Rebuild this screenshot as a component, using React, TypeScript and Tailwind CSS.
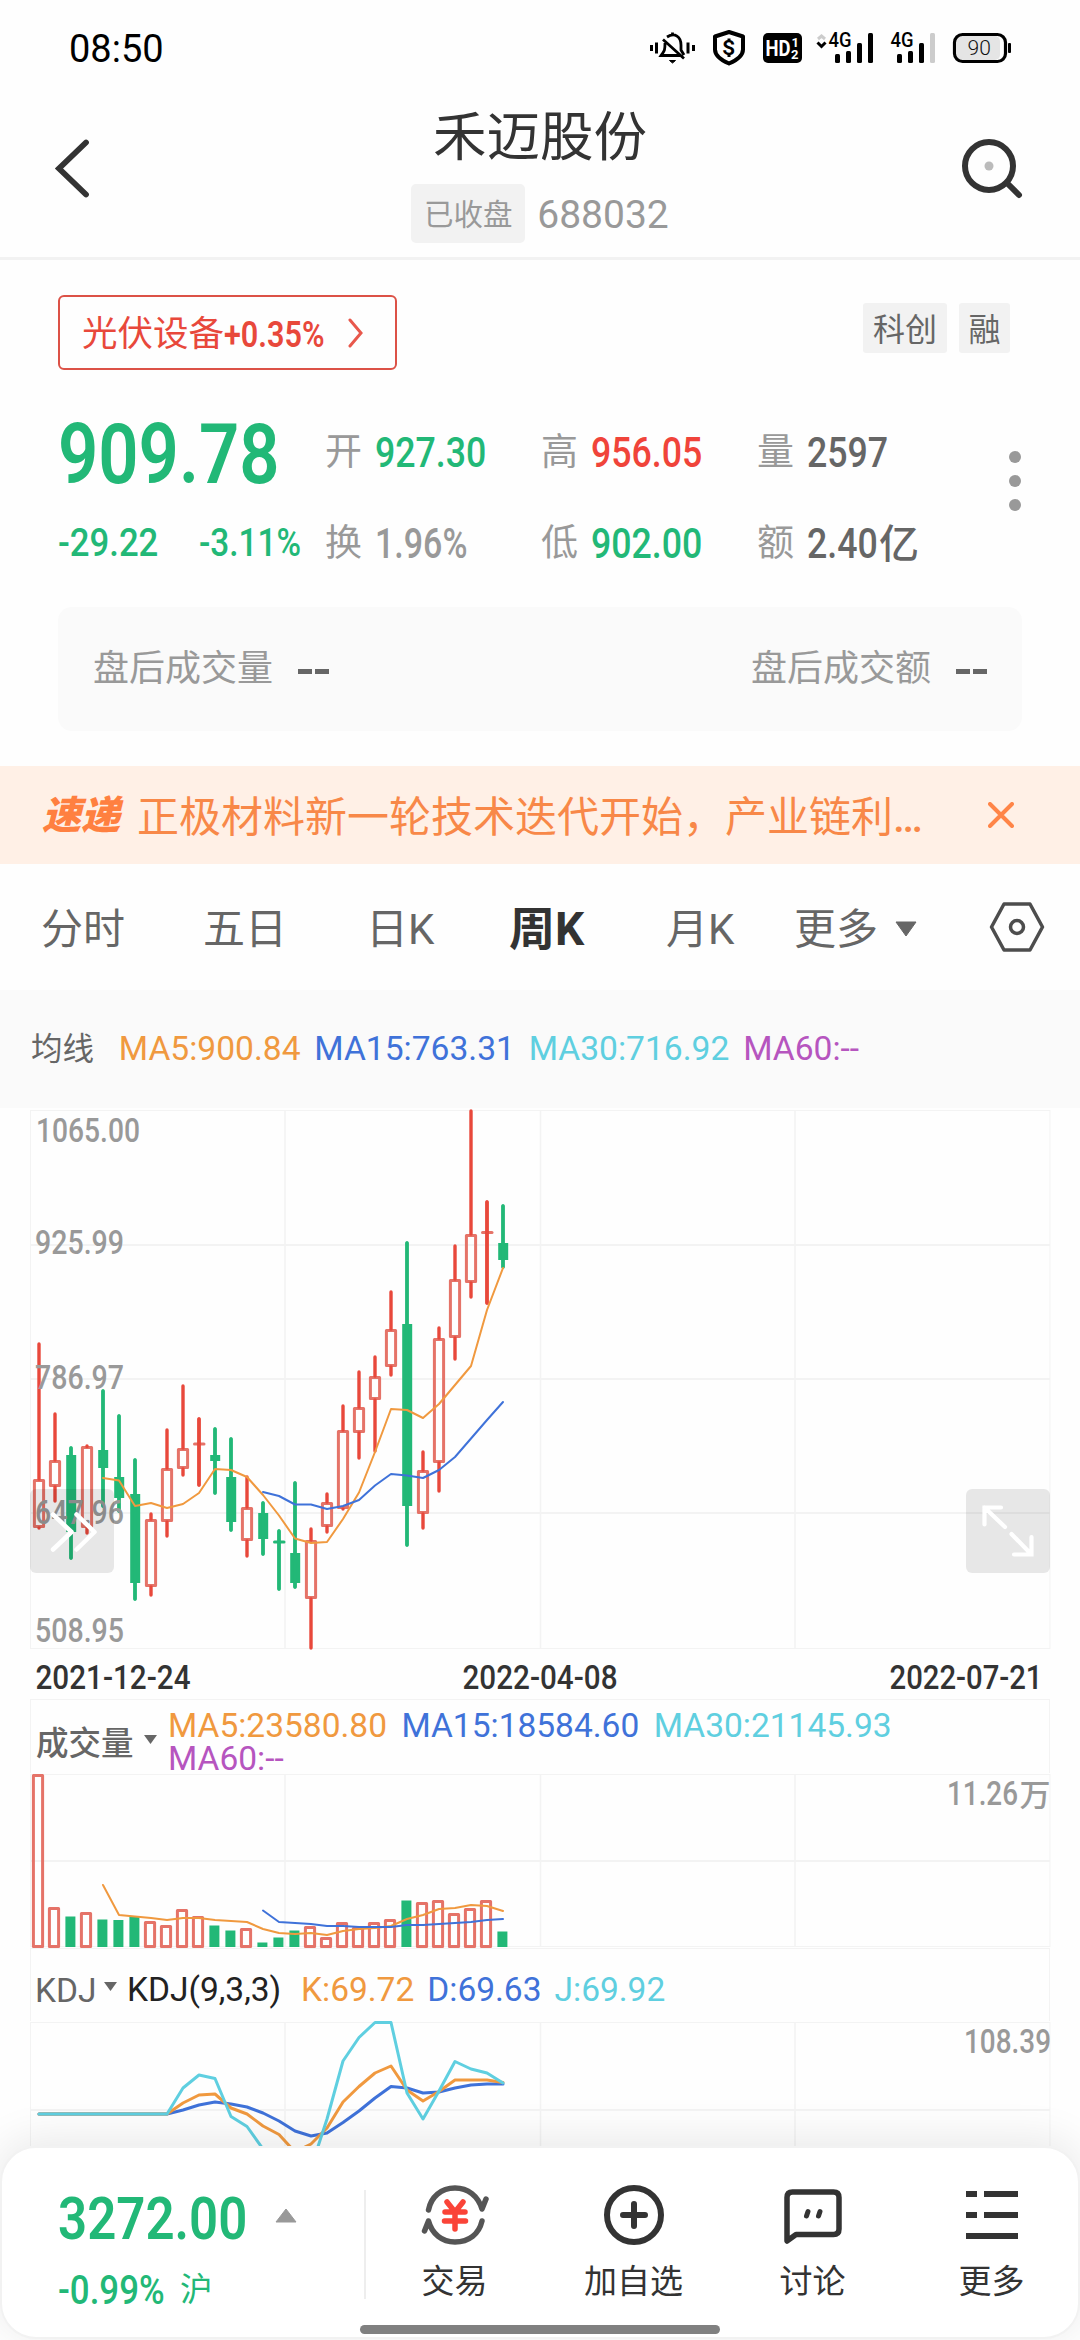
import type { ReactNode } from "react";
import clsx from "clsx";

const UP = "#e8483b";
const UP_BODY = "#e57368";
const DOWN = "#22b877";
const ORANGE = "#f0993f";
const BLUE = "#3f72d9";
const CYAN = "#5fcfe0";
const GRID = "#f3f3f3";

type Dir = "up" | "down";

// direction, wick top, body top, body bottom, wick bottom
const CANDLES: [Dir, number, number, number, number][] = [
  ["up", 1343, 1479, 1528, 1529],
  ["up", 1413, 1460, 1487, 1502],
  ["down", 1447, 1455, 1532, 1559],
  ["up", 1445, 1446, 1528, 1534],
  ["down", 1390, 1450, 1468, 1507],
  ["down", 1415, 1477, 1498, 1512],
  ["down", 1459, 1494, 1583, 1600],
  ["up", 1513, 1519, 1587, 1596],
  ["up", 1429, 1468, 1522, 1537],
  ["up", 1385, 1448, 1469, 1476],
  ["up", 1418, 1444, 1444, 1486],
  ["down", 1428, 1455, 1461, 1494],
  ["down", 1438, 1477, 1522, 1531],
  ["up", 1476, 1507, 1541, 1557],
  ["down", 1502, 1513, 1539, 1555],
  ["down", 1530, 1542, 1542, 1590],
  ["down", 1482, 1553, 1583, 1588],
  ["up", 1528, 1540, 1599, 1649],
  ["up", 1493, 1502, 1527, 1533],
  ["up", 1405, 1430, 1509, 1510],
  ["up", 1371, 1407, 1433, 1459],
  ["up", 1356, 1376, 1400, 1452],
  ["up", 1291, 1329, 1367, 1376],
  ["down", 1242, 1324, 1506, 1546],
  ["up", 1451, 1470, 1514, 1529],
  ["up", 1327, 1338, 1463, 1492],
  ["up", 1245, 1279, 1338, 1360],
  ["up", 1110, 1234, 1283, 1298],
  ["up", 1201, 1232.5, 1232.5, 1304],
  ["down", 1205, 1243, 1260, 1268],
];

const PRICE_MA5 = [
  1478, 1480.5, 1506, 1503, 1508, 1504, 1493, 1469, 1470, 1477, 1495, 1515.5, 1538.5, 1543, 1542,
  1519, 1492.5, 1452, 1409, 1410, 1418, 1404, 1385, 1366, 1310, 1268,
];
const PRICE_MA15 = [
  1492, 1496, 1504.5, 1504.5, 1509, 1506, 1500, 1485.5, 1474, 1475.5, 1478, 1470, 1457, 1438.5,
  1420, 1402,
];

const VOLUME_TOPS = [
  1774, 1907, 1916.5, 1912, 1919.5, 1920, 1917, 1921, 1925, 1909, 1916, 1925.5, 1930.5, 1928,
  1942.5, 1937.5, 1930.5, 1926, 1937, 1922, 1927, 1922, 1919, 1900.5, 1902, 1900, 1913, 1908, 1900,
  1931.5,
];
const VOLUME_MA5 = [
  1885, 1915, 1916.5, 1918, 1920, 1918, 1918, 1920, 1921, 1922, 1929, 1933, 1934, 1933, 1935, 1931,
  1929, 1928, 1926, 1919, 1915, 1909, 1908, 1905, 1906, 1911,
];
const VOLUME_MA15 = [
  1910.5, 1922, 1923, 1924, 1926, 1926, 1927, 1927, 1927, 1925, 1925, 1924, 1923, 1922, 1920, 1919,
];

const FLAT = Array<number>(9).fill(2114);
const KDJ_K = [
  ...FLAT, 2103, 2095, 2094, 2108, 2114, 2126, 2134.5, 2152, 2144, 2128, 2102, 2086.5, 2073, 2066,
  2090, 2101, 2091.5, 2080, 2080, 2080, 2082.5,
];
const KDJ_D = [
  ...FLAT, 2110, 2105, 2102, 2104, 2107, 2113, 2121, 2131, 2136, 2133, 2122.5, 2111, 2098, 2086.5,
  2088, 2093, 2092, 2088, 2085, 2084, 2084,
];
const KDJ_J = [
  ...FLAT, 2088, 2075, 2078.5, 2116.5, 2126.5, 2149, 2170, 2190, 2168, 2119, 2061, 2037.5, 2022.5,
  2022.5, 2093, 2119, 2091, 2061.5, 2069, 2073, 2083,
];

const xAt = (i: number) => 39 + i * 16;

function Series({ ys, from = 0, color, width = 2 }: { ys: number[]; from?: number; color: string; width?: number }) {
  return (
    <polyline
      points={ys.map((y, i) => `${xAt(i + from)},${y}`).join(" ")}
      fill="none"
      stroke={color}
      strokeWidth={width}
      strokeLinejoin="round"
      strokeLinecap="round"
    />
  );
}

function AxisText({ x, y, w, fill = "#999", children }: { x: number; y: number; w: number; fill?: string; children: ReactNode }) {
  return (
    <text x={x} y={y} fontSize="33.5" fontWeight="500" fill={fill} textLength={w} lengthAdjust="spacingAndGlyphs">
      {children}
    </text>
  );
}

function Grid({ top, bottom, rows }: { top: number; bottom: number; rows: number[] }) {
  return (
    <g stroke={GRID} fill="none">
      <rect x="30.5" y={top} width="1019.5" height={bottom - top} />
      {[285, 540.5, 795].map((x) => (
        <path key={x} d={`M${x} ${top}V${bottom}`} strokeWidth="1.6" />
      ))}
      {rows.map((y) => (
        <path key={y} d={`M30 ${y}H1050`} strokeWidth="2" />
      ))}
    </g>
  );
}

function PriceChart() {
  return (
    <svg viewBox="0 1108 1080 591" className="block h-[591px] w-full">
      <Grid top={1110.5} bottom={1648.5} rows={[1245, 1379, 1513]} />
      {CANDLES.map(([dir, high, top, bottom, low], i) => {
        const x = xAt(i);
        const color = dir === "up" ? UP : DOWN;
        const doji = top === bottom;
        return (
          <g key={i}>
            {dir === "up" && !doji && (
              <rect x={x - 4.6} y={top + 1.4} width="9.2" height={bottom - top - 2.8} fill="none" stroke={UP_BODY} strokeWidth="3" strokeLinejoin="round" />
            )}
            {dir === "down" && !doji && <rect x={x - 4.8} y={top} width="10" height={bottom - top} fill={DOWN} />}
            {doji && <path d={`M${x - 4.5} ${top}h9.5`} stroke={dir === "up" ? UP_BODY : DOWN} strokeWidth="3" strokeLinecap="round" />}
            <path d={`M${x} ${high + 1}V${Math.max(top, high + 1.5)}M${x} ${bottom}V${low - 1}`} stroke={color} strokeWidth="3.4" strokeLinecap="round" />
            {(dir === "down" || doji) && <path d={`M${x} ${high + 1}V${low - 1}`} stroke={color} strokeWidth="3.4" strokeLinecap="round" />}
          </g>
        );
      })}
      <Series ys={PRICE_MA5} from={4} color={ORANGE} />
      <Series ys={PRICE_MA15} from={14} color={BLUE} />
      <AxisText x={36} y={1142} w={104}>1065.00</AxisText>
      <AxisText x={35} y={1254} w={89}>925.99</AxisText>
      <AxisText x={35} y={1389} w={89}>786.97</AxisText>
      <AxisText x={35} y={1524} w={89}>647.96</AxisText>
      <AxisText x={35} y={1642} w={89}>508.95</AxisText>
      <AxisText x={35.500} y={1689} w={155} fill="#333">2021-12-24</AxisText>
      <AxisText x={462.500} y={1689} w={155} fill="#333">2022-04-08</AxisText>
      <AxisText x={889.500} y={1689} w={153} fill="#333">2022-07-21</AxisText>

      {/* scroll and full screen buttons */}
      <rect x="30" y="1489" width="84" height="84" rx="6" fill="#000" fillOpacity=".09" />
      <path d="M53 1514.500l18.500 17.500-18.500 17.500M76.500 1514.500l18 17.500-18 17.500" fill="none" stroke="#fff" strokeWidth="4.500" strokeLinecap="round" strokeLinejoin="round" />
      <rect x="966" y="1489" width="84" height="84" rx="6" fill="#000" fillOpacity=".09" />
      <path d="M1001 1507.500h-16.500v17M984.500 1507.500l20.500 19.500M1014 1554.500h17.500v-17.500M1031 1554l-19.500-20" fill="none" stroke="#fff" strokeWidth="4.200" strokeLinecap="round" />
    </svg>
  );
}

function VolumeChart() {
  return (
    <svg viewBox="0 1773 1080 176" className="block h-[176px] w-full">
      <Grid top={1774.5} bottom={1946.5} rows={[1861]} />
      <path d="M30 1948.500H1050" stroke={GRID} />
      {VOLUME_TOPS.map((top, i) => {
        const x = xAt(i) - 1;
        return CANDLES[i][0] === "up" ? (
          <rect key={i} x={x - 4.6} y={top + 1.4} width="9.2" height={1946.6 - top - 1.4} fill="none" stroke={UP_BODY} strokeWidth="3" strokeLinejoin="round" />
        ) : (
          <rect key={i} x={x - 4.6} y={top} width="10" height={1947 - top} fill={DOWN} />
        );
      })}
      <Series ys={VOLUME_MA5} from={4} color={ORANGE} />
      <Series ys={VOLUME_MA15} from={14} color={BLUE} />
      <AxisText x={947} y={1805} w={71}>11.26</AxisText>
      <text x="1019.500" y="1806" fontSize="31" fontWeight="500" fill="#999">万</text>
    </svg>
  );
}

function KdjChart() {
  return (
    <svg viewBox="0 2021 1080 125" className="block h-[125px] w-full">
      <Grid top={2022.5} bottom={2200} rows={[2110]} />
      <Series ys={KDJ_D} color={BLUE} width={3} />
      <Series ys={KDJ_K} color={ORANGE} width={3} />
      <Series ys={KDJ_J} color={CYAN} width={3} />
      <AxisText x={964} y={2053} w={87}>108.39</AxisText>
    </svg>
  );
}

// Narrow figures used for every price on the page
function Num({ className, children }: { className?: string; children: ReactNode }) {
  return (
    <span className={clsx("inline-block origin-left whitespace-nowrap font-medium", className)}>
      {children}
    </span>
  );
}

function StatusBar() {
  return (
    <div className="flex h-[96px] items-center justify-between pl-[69px] pr-[68px] pt-[2px] text-[38px] leading-none text-black">
      <span>08:50</span>
      <svg viewBox="648 27 364 44" className="h-[44px] w-[364px]">
        {/* muted bell */}
        <g fill="none" stroke="#000" strokeWidth="3">
          <path d="M651.500 45v6M656.500 42.500v11M688 42.500v11M693.500 45v6" />
          <path d="M667 37c8-5 14 0 14 8v5l3 5M665 43c0 9-1 8-4 12.500h19M672.500 32.500v3M663 39.500l21 19" strokeWidth="2.800" />
          <path d="M669.500 60.500h6l-3 2.500z" strokeWidth="1" fill="#000" />
        </g>
        <path d="M729 32l14 4.500v13c0 7-7 11-14 14-7-3-14-7-14-14v-13z" fill="none" stroke="#000" strokeWidth="4" strokeLinejoin="round" />
        <text x="722.500" y="55" fontSize="20" fontWeight="700">S</text>
        <path d="M729 38.500v3M729 54v3" stroke="#000" strokeWidth="3" />
        <rect x="763" y="33" width="39" height="30" rx="5" />
        <g fill="#fff" fontWeight="700">
          <text x="765.500" y="56" fontSize="22" textLength="25" lengthAdjust="spacingAndGlyphs">HD</text>
          <text x="791.500" y="46.500" fontSize="13">1</text>
          <text x="791" y="58.500" fontSize="13">2</text>
        </g>
        <path d="M818 39l3.500-3 3.500 3" fill="none" stroke="#ccc" strokeWidth="3" />
        <path d="M817.500 42.500l4 4 4-4" fill="none" stroke="#000" strokeWidth="3" />
        <text x="828.500" y="47" fontSize="20" fontWeight="500" textLength="23" lengthAdjust="spacingAndGlyphs">4G</text>
        <text x="890.500" y="47" fontSize="20" fontWeight="500" textLength="23" lengthAdjust="spacingAndGlyphs">4G</text>
        <rect x="835" y="54" width="5" height="9" rx="1.500" />
        <rect x="846" y="51" width="5" height="12" rx="1.500" />
        <rect x="857" y="43" width="5" height="20" rx="1.500" />
        <rect x="868" y="33" width="5" height="30" rx="1.500" />
        <rect x="897" y="54" width="5" height="9" rx="1.500" />
        <rect x="908" y="51" width="5" height="12" rx="1.500" />
        <rect x="919" y="43" width="5" height="20" rx="1.500" />
        <rect x="930" y="33" width="5" height="30" rx="1.500" fill="#ccc" />
        <rect x="957" y="36" width="43" height="24" rx="5" fill="#e5e5e5" />
        <rect x="954.500" y="34.500" width="51" height="27" rx="8" fill="none" stroke="#000" strokeWidth="3.200" />
        <rect x="1008" y="43" width="3" height="10" rx="1" />
        <text x="967.500" y="55" fontSize="21" fontWeight="300" fill="#111">90</text>
      </svg>
    </div>
  );
}

function Header() {
  return (
    <header className="flex h-[164px] items-start justify-between border-b-[3px] border-[#f2f2f2]">
      <svg viewBox="0 0 120 100" className="mt-[23px] h-[100px] w-[120px]">
        <path d="M86 23.500L59 49.500l27 26" fill="none" stroke="#333" strokeWidth="5.800" strokeLinecap="round" />
      </svg>
      <div className="flex flex-col items-center">
        <h1 className="mt-[10px] text-[53.5px] leading-[64px] text-[#333]">禾迈股份</h1>
        <div className="mt-[14px] flex items-center gap-3 text-[#999]">
          <span className="flex h-[59px] w-[114px] items-center justify-center rounded-[5px] bg-[#f2f2f2] pt-[4px] text-[29.5px] leading-none">
            已收盘
          </span>
          <span className="pt-[3px] text-[39px] leading-none">688032</span>
        </div>
      </div>
      <svg viewBox="0 0 120 100" className="mt-[23px] h-[100px] w-[120px]">
        <circle cx="29" cy="47" r="24" fill="none" stroke="#333" strokeWidth="6" />
        <circle cx="29" cy="47" r="4.500" fill="#bbb" />
        <path d="M47 64l12 12" stroke="#333" strokeWidth="6" strokeLinecap="round" />
      </svg>
    </header>
  );
}

const QUOTES = [
  { label: "开", value: "927.30", tone: "text-[#22b877]" },
  { label: "高", value: "956.05", tone: "text-[#f0443a]" },
  { label: "量", value: "2597", tone: "text-[#666]" },
  { label: "换", value: "1.96%", tone: "text-[#999]" },
  { label: "低", value: "902.00", tone: "text-[#22b877]" },
  { label: "额", value: "2.40", unit: "亿", tone: "text-[#666]" },
];

function Dashes() {
  return (
    <span className="flex gap-[3px] pt-1">
      <i className="h-[5px] w-[14px] bg-[#666]" />
      <i className="h-[5px] w-[14px] bg-[#666]" />
    </span>
  );
}

function Quote() {
  return (
    <section className="px-[58px] pt-[35px]">
      <div className="flex items-start justify-between">
        <div className="flex h-[75px] w-[339px] items-center rounded-[6px] border-2 border-[#dc5247] pl-[22px] leading-none text-[#e8483b]">
          <span className="pt-[5px] text-[35.5px]">光伏设备</span>
          <Num className="w-[124px] scale-x-[0.85] pt-[5px] text-[36px] font-semibold">+0.35%</Num>
          <svg viewBox="0 0 16 30" className="h-[30px] w-[16px]">
            <path d="M2 2l11 13L2 28" fill="none" stroke="#e8584c" strokeWidth="3" strokeLinecap="round" />
          </svg>
        </div>
        <div className="mr-3 mt-2 flex gap-3 text-[32px] leading-none text-[#666]">
          <span className="flex h-[50px] w-[84px] items-center justify-center rounded-[3px] bg-[#f2f2f2] pt-[3px]">科创</span>
          <span className="flex h-[50px] w-[51px] items-center justify-center rounded-[3px] bg-[#f2f2f2] pt-[3px]">融</span>
        </div>
      </div>

      <div className="flex h-[237px]">
        <div className="w-[267px] pt-[43px] text-[#22b877]">
          <Num className="block scale-x-[0.84] text-[84px] font-semibold leading-[84px]">909.78</Num>
          <div className="mt-[24px] flex text-[39px] leading-[44px]">
            <Num className="w-[141px] scale-x-[0.89]">-29.22</Num>
            <Num className="scale-x-[0.855]">-3.11%</Num>
          </div>
        </div>
        <div className="grid h-[182px] w-[660px] grid-cols-[216px_216px_216px] grid-rows-[91px_91px] pt-[37px] leading-none">
          {QUOTES.map((q) => (
            <div key={q.label} className="flex h-[91px] items-center gap-[13px]">
              <span className="text-[37px] text-[#999]">{q.label}</span>
              <span className={clsx("flex items-center", q.tone)}>
                <Num
                  className={clsx(
                    "text-[42px]",
                    q.value.endsWith("%") ? "scale-x-[0.81]" : "scale-x-[0.85]",
                    q.unit && "w-[72px]",
                  )}
                >
                  {q.value}
                </Num>
                {q.unit && <span className="pt-[2px] text-[40px] font-medium">{q.unit}</span>}
              </span>
            </div>
          ))}
        </div>
        <div className="ml-[24px] flex flex-col gap-3 pt-[81px]">
          <i className="size-3 rounded-full bg-[#999]" />
          <i className="size-3 rounded-full bg-[#999]" />
          <i className="size-3 rounded-full bg-[#999]" />
        </div>
      </div>

      <div className="flex h-[124px] items-center justify-between rounded-[14px] bg-[#fafafa] px-[35px] text-[36px] leading-none text-[#999]">
        <span className="flex items-center gap-[25px]">
          盘后成交量
          <Dashes />
        </span>
        <span className="flex items-center gap-[25px]">
          盘后成交额
          <Dashes />
        </span>
      </div>
    </section>
  );
}

function NewsBar() {
  return (
    <div className="mt-[35px] flex h-[98px] items-center bg-[#fff0e6] pl-[42px] leading-none text-[#f88848]">
      <span className="w-[95px] pt-[3px] text-[39px] font-black italic text-[#ff8040]">速递</span>
      <span className="w-[851px] pt-[6px] text-[42px]">
        正极材料新一轮技术迭代开始，产业链利<span className="font-medium">…</span>
      </span>
      <svg viewBox="0 0 26 26" className="h-[26px] w-[26px]">
        <path d="M2 2l22 22M24 2L2 24" stroke="#ff8548" strokeWidth="4" strokeLinecap="round" />
      </svg>
    </div>
  );
}

function Tabs() {
  return (
    <nav className="flex h-[126px] items-center pl-[41px] text-[42px] leading-none text-[#666]">
      <span className="w-[162px] pt-[5px]">分时</span>
      <span className="w-[163px] pt-[5px]">五日</span>
      <span className="w-[143px] pt-[5px]">日K</span>
      <span className="w-[157px] pt-[4px] text-[46px] font-bold text-[#333]">周K</span>
      <span className="w-[128px] pt-[5px]">月K</span>
      <span className="w-[101px] pt-[5px]">更多</span>
      <svg viewBox="0 0 22 16" className="mt-1 h-[16px] w-[22px]">
        <path d="M1 1h20L11 15z" fill="#666" stroke="#666" strokeLinejoin="round" />
      </svg>
      <svg viewBox="0 0 56 52" className="ml-[72px] h-[52px] w-[56px]">
        <path d="M15 3h26l12.500 23L41 49H15L2.500 26z" fill="none" stroke="#4d4d4d" strokeWidth="3.500" strokeLinejoin="round" />
        <circle cx="28" cy="26" r="6.500" fill="none" stroke="#4d4d4d" strokeWidth="3.500" />
      </svg>
    </nav>
  );
}

function Caret({ className }: { className?: string }) {
  return (
    <svg viewBox="0 0 13 9" className={clsx("h-[9px] w-[13px]", className)}>
      <path d="M0 0h13L6.500 9z" fill="#666" />
    </svg>
  );
}

function TabItem({ label, children }: { label: string; children: ReactNode }) {
  return (
    <div className="flex w-[179px] flex-col items-center">
      <svg viewBox="0 0 68 68" className="h-[68px] w-[68px]">{children}</svg>
      <span className="mt-[16px] text-[33px] leading-[34px] text-[#333]">{label}</span>
    </div>
  );
}

function BottomBar() {
  return (
    <footer className="relative h-[193px] rounded-[36px] border-2 border-[#f2f2f2] bg-white shadow-[0_-6px_44px_rgba(0,0,0,0.09)]">
      <div className="flex">
        <div className="w-[305px] shrink-0 pl-[56px] pt-[41px] text-[#22b877]">
          <div className="flex items-center">
            <Num className="w-[217px] scale-x-[0.85] text-[60px] font-semibold leading-[60px]">3272.00</Num>
            <svg viewBox="0 0 22 15" className="-mt-[8px] h-[15px] w-[22px] shrink-0">
              <path d="M11 1l10 13H1z" fill="#999" stroke="#999" strokeLinejoin="round" />
            </svg>
          </div>
          <div className="mt-[19px] flex items-center leading-[44px]">
            <Num className="w-[122px] scale-x-[0.85] text-[41px]">-0.99%</Num>
            <span className="text-[32.5px]">沪</span>
          </div>
        </div>
        <div className="ml-[57px] mt-[42px] h-[109px] w-[2px] shrink-0 bg-[#eee]" />
        <div className="-ml-[1px] mt-[33px] flex w-[716px] shrink-0">
          <TabItem label="交易">
            <g fill="none" stroke="#555" strokeWidth="5.500" strokeLinecap="round" strokeLinejoin="round">
              <path d="M7.500 29C10 16 20 7 34 7c13 0 23 8 27 21l4-10" />
              <path d="M61 40c-3 13-13 21-27 21C21 61 11 53 7.500 40L3.500 50" />
            </g>
            <path d="M26 21l8 10 8-10M24 31h20M23.500 40h21M34 31v17" fill="none" stroke="#fa4438" strokeWidth="5.500" strokeLinecap="round" strokeLinejoin="round" />
          </TabItem>
          <TabItem label="加自选">
            <circle cx="34" cy="34" r="27" fill="none" stroke="#333" strokeWidth="6" />
            <path d="M34 23v22M23 34h22" stroke="#333" strokeWidth="6" strokeLinecap="round" />
          </TabItem>
          <TabItem label="讨论">
            <path d="M8 60V16.500c0-4 2-5.500 5.500-5.500h41c4 0 5.500 2 5.500 5.500V48c0 4-2 5.500-5.500 5.500H17z" fill="none" stroke="#333" strokeWidth="5.500" strokeLinejoin="round" />
            <path d="M29 30.500l-1.500 4.500M41 30.500l-1.500 4.500" stroke="#333" strokeWidth="5" strokeLinecap="round" />
          </TabItem>
          <TabItem label="更多">
            <path d="M8 13h11M26 13h34M8 34h11M26 34h34M8 55h52" stroke="#333" strokeWidth="6" />
          </TabItem>
        </div>
      </div>
      <div className="absolute bottom-[3px] left-[358px] h-[9px] w-[360px] rounded-full bg-[#808080]" />
    </footer>
  );
}

export default function App() {
  return (
    <div className="flex h-[2340px] w-[1080px] flex-col overflow-hidden bg-[#fefefe] font-[Roboto,'Noto_Sans_CJK_SC',sans-serif]">
      <StatusBar />
      <Header />
      <Quote />
      <NewsBar />
      <Tabs />

      <div className="flex h-[118px] items-center gap-[13.8px] bg-[#fafafa] pl-[31px] text-[33.6px] leading-none">
        <span className="w-[74px] pt-[2px] text-[31.5px] text-[#666]">均线</span>
        <span className="text-[#f0993f]">MA5:900.84</span>
        <span className="text-[#3f72d9]">MA15:763.31</span>
        <span className="text-[#5fcfe0]">MA30:716.92</span>
        <span className="text-[#b655bf]">MA60:--</span>
      </div>
      <PriceChart />

      <div className="mx-[30px] flex h-[74px] border border-b-0 border-[#f3f3f3] pl-[5px] pt-[9px] text-[33.5px] leading-[33px]">
        <div className="flex h-[66px] w-[132px] items-center gap-[10px] pt-[5px] text-[32.5px] font-medium text-[#666]">
          成交量
          <Caret className="-mt-[10px]" />
        </div>
        <div className="flex w-[760px] flex-wrap gap-x-[14.5px]">
          <span className="text-[#f0993f]">MA5:23580.80</span>
          <span className="text-[#3f72d9]">MA15:18584.60</span>
          <span className="text-[#5fcfe0]">MA30:21145.93</span>
          <span className="text-[#b655bf]">MA60:--</span>
        </div>
      </div>
      <VolumeChart />

      <div className="mx-[30px] flex h-[72px] items-center border-x border-[#f3f3f3] pl-[4px] pt-[9px] text-[33.5px] leading-none">
        <div className="flex w-[92px] items-center gap-[7px] pt-[3px] text-[#666]">
          KDJ
          <Caret className="-mt-[9px]" />
        </div>
        <span className="w-[174px] text-[#222]">KDJ(9,3,3)</span>
        <div className="flex gap-[13px]">
          <span className="text-[#f0993f]">K:69.72</span>
          <span className="text-[#3f72d9]">D:69.63</span>
          <span className="text-[#5fcfe0]">J:69.92</span>
        </div>
      </div>
      <KdjChart />
      <BottomBar />
    </div>
  );
}
